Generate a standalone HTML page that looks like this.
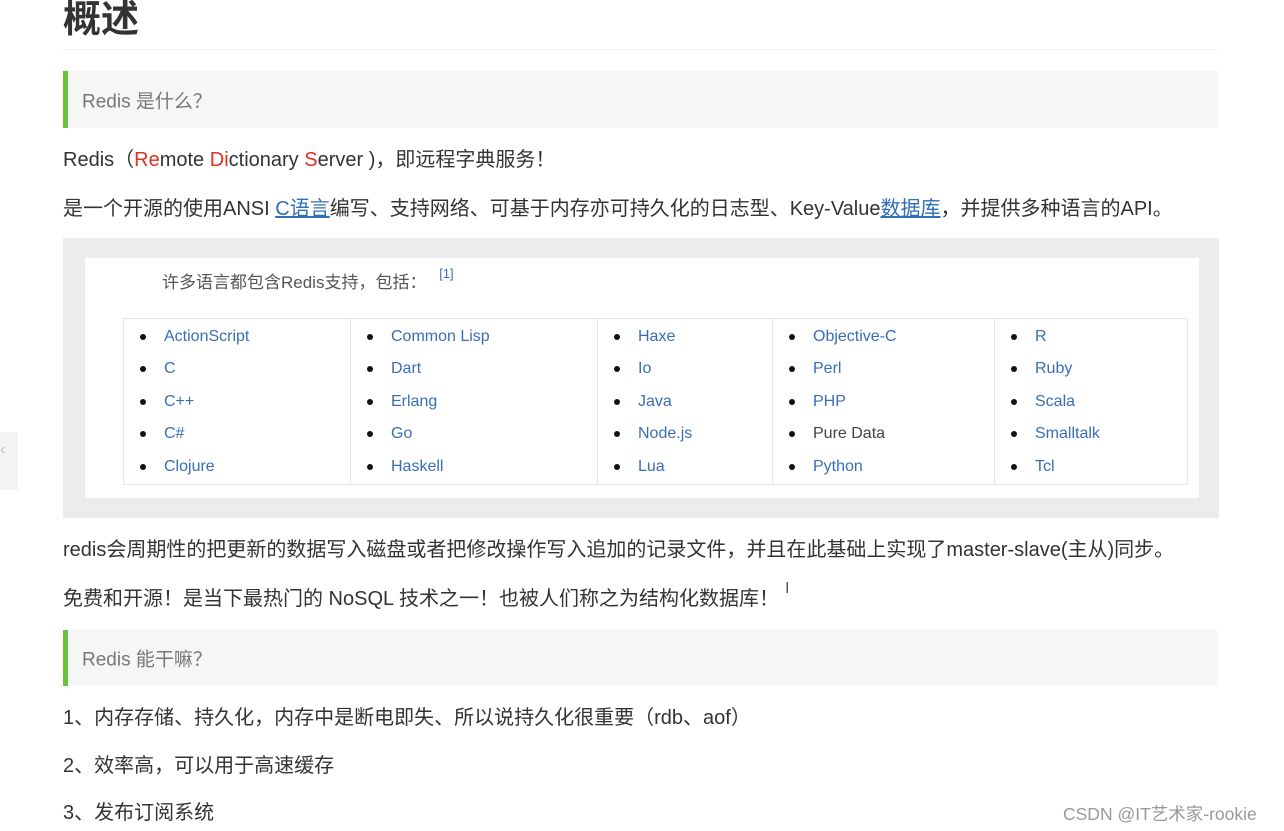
<!DOCTYPE html>
<html><head><meta charset="utf-8"><style>
*{margin:0;padding:0;box-sizing:border-box}
body{width:1284px;height:831px;background:#fff;position:relative;overflow:hidden;font-family:"Liberation Sans","Noto Sans CJK SC",sans-serif;color:#333}
.a{position:absolute;white-space:nowrap}
.p{font-size:20px;left:63px;line-height:24px}
.bq{position:absolute;left:63px;width:1155px;background:#f6f6f6;border-left:5px solid #67c23a}
.bq span{position:absolute;left:14px;top:50%;transform:translateY(-50%);font-size:19px;color:#777;white-space:nowrap}
a{color:#2f6fb7;text-decoration:underline}
.r{color:#e0301e}
.tbl{position:absolute;left:123px;top:318px;width:1065px;height:167px;border:1px solid #e6e6e6;display:flex}
.col{border-right:1px solid #e6e6e6;padding-top:7px}
.col:last-child{border-right:none}
.it{height:32.4px;line-height:22px;font-size:16px;color:#3a6db8;position:relative;padding-left:40px;white-space:nowrap}
.it:before{content:"";position:absolute;left:16px;top:8px;width:6px;height:6px;border-radius:50%;background:#111}
.blk{color:#444}
</style></head><body>
<div class="a" style="left:63px;top:-5px;font-size:38px;font-weight:bold;color:#333;line-height:50px">概述</div>
<div class="a" style="left:63px;top:49px;width:1155px;height:1px;background:#eee"></div>
<div class="bq" style="top:71px;height:57px"><span>Redis 是什么？</span></div>
<div class="a p" style="top:148px">Redis（<span class="r">Re</span>mote <span class="r">Di</span>ctionary <span class="r">S</span>erver )，即远程字典服务！</div>
<div class="a p" style="top:197px">是一个开源的使用ANSI <a>C语言</a>编写、支持网络、可基于内存亦可持久化的日志型、Key-Value<a>数据库</a>，并提供多种语言的API。</div>
<div class="a" style="left:63px;top:238px;width:1156px;height:280px;background:#ececec"></div>
<div class="a" style="left:85px;top:258px;width:1114px;height:240px;background:#fff"></div>
<div class="a" style="left:162px;top:268px;font-size:17px;color:#555">许多语言都包含Redis支持，包括： <sup style="color:#3a6db8;font-size:13px;position:relative;top:-3px;margin-left:8px">[1]</sup></div>
<div class="tbl">
<div class="col" style="width:227px"><div class="it">ActionScript</div><div class="it">C</div><div class="it">C++</div><div class="it">C#</div><div class="it">Clojure</div></div>
<div class="col" style="width:247px"><div class="it">Common Lisp</div><div class="it">Dart</div><div class="it">Erlang</div><div class="it">Go</div><div class="it">Haskell</div></div>
<div class="col" style="width:175px"><div class="it">Haxe</div><div class="it">Io</div><div class="it">Java</div><div class="it">Node.js</div><div class="it">Lua</div></div>
<div class="col" style="width:222px"><div class="it">Objective-C</div><div class="it">Perl</div><div class="it">PHP</div><div class="it blk">Pure Data</div><div class="it">Python</div></div>
<div class="col" style="flex:1"><div class="it">R</div><div class="it">Ruby</div><div class="it">Scala</div><div class="it">Smalltalk</div><div class="it">Tcl</div></div>
</div>
<div class="a p" style="top:538px">redis会周期性的把更新的数据写入磁盘或者把修改操作写入追加的记录文件，并且在此基础上实现了master-slave(主从)同步。</div>
<div class="a p" style="top:587px">免费和开源！是当下最热门的 NoSQL 技术之一！也被人们称之为结构化数据库！</div>
<div class="a" style="left:785px;top:580px;font-size:16px;color:#555">I</div>
<div class="bq" style="top:630px;height:56px"><span>Redis 能干嘛？</span></div>
<div class="a p" style="top:706px">1、内存存储、持久化，内存中是断电即失、所以说持久化很重要（rdb、aof）</div>
<div class="a p" style="top:754px">2、效率高，可以用于高速缓存</div>
<div class="a p" style="top:801px">3、发布订阅系统</div>
<div class="a" style="left:0;top:432px;width:18px;height:58px;background:#f3f3f3;color:#bbb;font-size:16px;line-height:36px;padding-left:0">‹</div>
<div class="a" style="left:1063px;top:801px;font-size:17.5px;color:#999">CSDN @IT艺术家-rookie</div>
</body></html>
